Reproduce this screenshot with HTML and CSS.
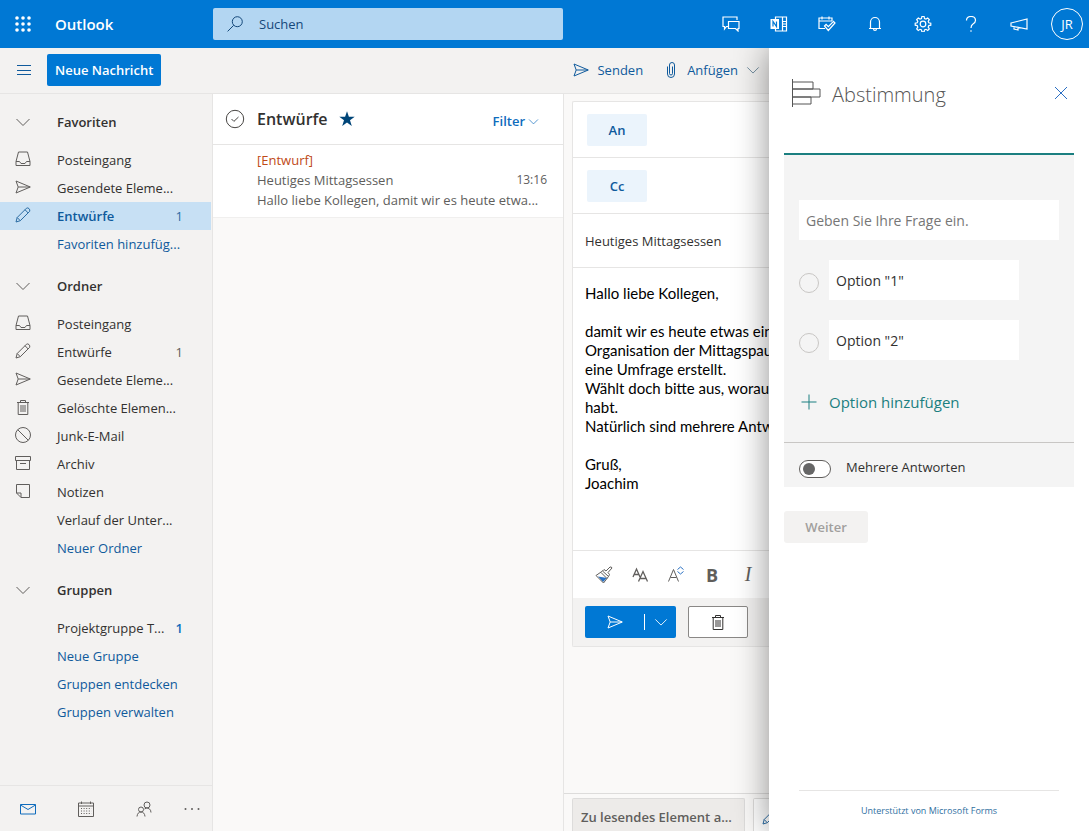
FILE: index.html
```html
<!DOCTYPE html>
<html lang="de">
<head>
<meta charset="utf-8">
<title>Outlook</title>
<link rel="stylesheet" href="styles.css">
</head>
<body>
<svg class="sprite" aria-hidden="true">
  <symbol id="chevron" viewBox="0 0 16 16"><path d="M1.500 5 8 11.500 14.500 5"/></symbol>
  <symbol id="inbox" viewBox="0 0 16 16"><path d="M3.500 1h9L15 10.500V14.500H1V10.500zM1 10.500h3.500L6 12.500h4l1.500-2H15"/></symbol>
  <symbol id="send" viewBox="0 0 16 16"><path d="M1 2 15.300 8 1 14 3.200 8zM3.200 8H15"/></symbol>
  <symbol id="pencil" viewBox="0 0 16 16"><path d="M1 15l1.200-4.500L11.500 1.200q1.300-.8 2.500.4t.7 2.700L5.300 13.700zM2.200 10.500l3.100 3.200M10 2.700 13.200 6"/></symbol>
  <symbol id="trash" viewBox="0 0 16 16"><path d="M2 3.500h12M5.500 3.500V1.500h5v2M3.200 3.500v12h9.600v-12M6 6v7M8 6v7M10 6v7"/></symbol>
  <symbol id="block" viewBox="0 0 16 16"><circle cx="8" cy="8" r="7.500"/><path d="M2.700 2.700l10.600 10.600"/></symbol>
  <symbol id="archive" viewBox="0 0 16 16"><path d="M.5 1.500h15v4H.5zM1.500 5.500v9h13v-9M5 8.500h6"/></symbol>
  <symbol id="note" viewBox="0 0 16 16"><path d="M1.500 1.500h13v13H6l-4.500-4.500zM1.500 10H6v4.500"/></symbol>
</svg>

<header class="topbar">
  <button class="launcher" aria-label="App-Startfeld"><svg viewBox="0 0 16 16"><g fill="currentColor" stroke="none"><circle cx="2" cy="2" r="1.800"/><circle cx="8" cy="2" r="1.800"/><circle cx="14" cy="2" r="1.800"/><circle cx="2" cy="8" r="1.800"/><circle cx="8" cy="8" r="1.800"/><circle cx="14" cy="8" r="1.800"/><circle cx="2" cy="14" r="1.800"/><circle cx="8" cy="14" r="1.800"/><circle cx="14" cy="14" r="1.800"/></g></svg></button>
  <a class="brand" href="#">Outlook</a>
  <label class="search">
    <svg viewBox="0 0 16 16"><circle cx="10.300" cy="5.700" r="5"/><path d="M6.700 9.300.6 15.400"/></svg>
    <input type="search" placeholder="Suchen" aria-label="Suchen">
  </label>
  <nav class="topicons" aria-label="Werkzeuge">
    <button aria-label="Chat"><svg viewBox="0 0 18 16"><path d="M6 10.500H4.500L2.500 13v-2.500H1V1h14v3M6.500 5.500h10.500v7h-1v2.500l-2.500-2.500h-7z"/></svg></button>
    <button aria-label="OneNote"><svg viewBox="0 0 18 16"><path d="M5.500 3V1h11v14h-11v-2M12.500 1v14M12.500 5.500h4M12.500 8h4M12.500 10.500h4"/><path fill="currentColor" stroke="none" d="M.5 3h8.500v10H.5z"/><path stroke="#0078d4" d="M3 10.500v-5l3.500 5v-5"/></svg></button>
    <button aria-label="Mein Tag"><svg viewBox="0 0 18 16"><path d="M7 12.500H1V2h13v3M1 5h13M4 .5V3.500M11 .5v3M6.500 10l1.600-1.600 2.200 2.200L15.500 5.400 17 7l-6.700 7.500z"/></svg></button>
    <button aria-label="Benachrichtigungen"><svg viewBox="0 0 18 16"><path d="M3 12.500h12M4.500 12.500V6a4.500 4.500 0 0 1 9 0v6.500M7.500 12.500a1.500 2 0 0 0 3 0"/></svg></button>
    <button aria-label="Einstellungen"><svg viewBox="0 0 18 16"><path d="M7.900.5h2.200l.4 2 1.500.6 1.700-1.100 1.600 1.600-1.100 1.700.6 1.500 2 .4v2l-2 .4-.6 1.500 1.100 1.700-1.600 1.600-1.700-1.100-1.500.6-.4 2H7.900l-.4-2-1.500-.6-1.700 1.100-1.600-1.600 1.100-1.700-.6-1.500-2-.4v-2l2-.4.6-1.500-1.100-1.700L4.300 2 6 3.100l1.500-.6z"/><circle cx="9" cy="8" r="2.800"/></svg></button>
    <button aria-label="Hilfe"><svg viewBox="0 0 18 16"><path d="M4.500 4.500q0-4 4.500-4t4.500 4Q13.500 6.500 11 8 9 9.300 9 12M9 14.200v1.600"/></svg></button>
    <button aria-label="Neuigkeiten"><svg viewBox="0 0 18 16"><path d="M1 7 17 3v10L1 10zM4 10.500v2.500l4 1v-2.500"/></svg></button>
  </nav>
  <button class="avatar" aria-label="Konto JR">JR</button>
</header>

<div class="app">
  <div class="workspace">
    <div class="commands">
      <button class="menu" aria-label="Menü"><svg viewBox="0 0 16 16"><path d="M1 3.500h14M1 8.500h14M1 12.500h14"/></svg></button>
      <button class="new">Neue Nachricht</button>
      <div class="actions">
        <button class="action"><svg><use href="#send"/></svg>Senden</button>
        <button class="action"><svg viewBox="0 0 16 16"><path d="M4.500 4.500V12a3.500 3.500 0 0 0 7 0V3a2.500 2.500 0 0 0-5 0v8.500a1.500 1.500 0 0 0 3 0V4.500"/></svg>Anfügen<svg class="drop"><use href="#chevron"/></svg></button>
      </div>
    </div>

    <div class="columns">
      <div class="sidebar">
        <nav class="folders" aria-label="Ordner">
          <section>
            <h2><svg><use href="#chevron"/></svg>Favoriten</h2>
            <a href="#"><svg><use href="#inbox"/></svg>Posteingang</a>
            <a href="#"><svg><use href="#send"/></svg>Gesendete Eleme...</a>
            <a href="#" class="selected"><svg><use href="#pencil"/></svg><strong>Entwürfe</strong><span class="count">1</span></a>
            <a href="#" class="link">Favoriten hinzufüg...</a>
          </section>
          <section>
            <h2><svg><use href="#chevron"/></svg>Ordner</h2>
            <a href="#"><svg><use href="#inbox"/></svg>Posteingang</a>
            <a href="#"><svg><use href="#pencil"/></svg>Entwürfe<span class="count">1</span></a>
            <a href="#"><svg><use href="#send"/></svg>Gesendete Eleme...</a>
            <a href="#"><svg><use href="#trash"/></svg>Gelöschte Elemen...</a>
            <a href="#"><svg><use href="#block"/></svg>Junk-E-Mail</a>
            <a href="#"><svg><use href="#archive"/></svg>Archiv</a>
            <a href="#"><svg><use href="#note"/></svg>Notizen</a>
            <a href="#" class="plain">Verlauf der Unter...</a>
            <a href="#" class="link">Neuer Ordner</a>
          </section>
          <section>
            <h2><svg><use href="#chevron"/></svg>Gruppen</h2>
            <a href="#" class="plain">Projektgruppe T...<span class="count unread">1</span></a>
            <a href="#" class="link">Neue Gruppe</a>
            <a href="#" class="link">Gruppen entdecken</a>
            <a href="#" class="link">Gruppen verwalten</a>
          </section>
        </nav>
        <nav class="modules" aria-label="Module">
          <button class="current" aria-label="E-Mail"><svg viewBox="0 0 16 16"><path d="M.5 3.500h15v9.500H.5zM.5 4 8 8.500 15.500 4"/></svg></button>
          <button aria-label="Kalender"><svg viewBox="0 0 16 16"><path d="M.5 2h15v13.500H.5zM.5 5h15M3.500.5V3M12.500.5V3"/><path stroke-dasharray="1 1.600" d="M3 7.500h10.500M3 10h10.500M3 12.500h10.500"/></svg></button>
          <button aria-label="Personen"><svg viewBox="0 0 16 16"><circle cx="11" cy="4" r="3"/><circle cx="5" cy="8.500" r="2.500"/><path d="M1 15.500q.5-4.500 4-4.500t4 4.500M8.500 8Q11 6 13 7.500q2 1.500 2 4"/></svg></button>
          <button aria-label="Mehr"><svg viewBox="0 0 16 16"><g fill="currentColor" stroke="none"><circle cx="1.500" cy="8" r="1"/><circle cx="8" cy="8" r="1"/><circle cx="14.500" cy="8" r="1"/></g></svg></button>
        </nav>
      </div>

      <section class="messages" aria-label="Nachrichtenliste">
        <header class="listhead">
          <button class="check" aria-label="Alle auswählen"><svg viewBox="0 0 20 20"><circle cx="10" cy="10" r="8.700"/><path d="M6.500 10l2.400 2.400L13.500 8"/></svg></button>
          <h1>Entwürfe</h1>
          <svg class="star" viewBox="0 0 16 16"><path d="M8 .3l1.900 5.500h5.800L11 9.300l1.800 5.600L8 11.500l-4.800 3.400L5 9.300.3 5.800h5.800z"/></svg>
          <button class="filter">Filter<svg><use href="#chevron"/></svg></button>
        </header>
        <a class="message" href="#">
          <span class="draft">[Entwurf]</span>
          <span class="subject">Heutiges Mittagsessen<time>13:16</time></span>
          <span class="preview">Hallo liebe Kollegen, damit wir es heute etwa...</span>
        </a>
      </section>

      <section class="reading" aria-label="Nachricht verfassen">
        <form class="card">
          <div class="recipient"><button type="button">An</button></div>
          <div class="recipient"><button type="button">Cc</button></div>
          <input class="topic" aria-label="Betreff" value="Heutiges Mittagsessen">
          <div class="editor" contenteditable="true" role="textbox" aria-label="Nachrichtentext">
            <p>Hallo liebe Kollegen,</p>
            <p>damit wir es heute etwas ein<br>Organisation der Mittagspau<br>eine Umfrage erstellt.<br>Wählt doch bitte aus, worauf<br>habt.<br>Natürlich sind mehrere Antw</p>
            <p>Gruß,<br>Joachim</p>
          </div>
          <div class="format">
            <button type="button" aria-label="Format übertragen"><svg viewBox="0 0 18 18"><path fill="#2b72c4" stroke="none" d="M3 10.500l9 1.500L8 16z"/><path d="M1 9.500 7.500 5l6 5.500L8.500 17zM7.500 5 9 3.500 11 5l4-4q1.500-.5 2 1l-4 4.500 1.500 2-1 2M6 6.500l6 6"/></svg></button>
            <button type="button" aria-label="Schriftart"><svg viewBox="0 0 18 18"><path stroke-width="1.300" d="M2 11 5.500 3 9 11M3.200 8.500h4.600M7.500 15.500 12 5.500l4.500 10M9 12.500h6"/></svg></button>
            <button type="button" aria-label="Schriftgrad"><svg viewBox="0 0 18 18"><path d="M1.500 15.500 6.500 3.500l5 12M3.500 11.500h6"/><path stroke="#2b72c4" d="M10.500 3.500l3-2.500 3 2.500M10.500 5.500l3 2.500 3-2.500"/></svg></button>
            <button type="button" class="bold">B</button>
            <button type="button" class="italic">I</button>
          </div>
          <div class="submit">
            <div class="split">
              <button type="button" aria-label="Senden"><svg><use href="#send"/></svg></button>
              <button type="button" class="more" aria-label="Weitere Sendeoptionen"><svg><use href="#chevron"/></svg></button>
            </div>
            <button type="button" class="discard" aria-label="Verwerfen"><svg><use href="#trash"/></svg></button>
          </div>
        </form>
        <div class="tabs">
          <button class="tab">Zu lesendes Element a...</button>
          <button class="tab open" aria-label="Entwurf"><svg><use href="#pencil"/></svg></button>
        </div>
      </section>
    </div>
  </div>

  <aside class="poll">
    <header class="pollhead">
      <svg viewBox="0 0 30 28"><path d="M1.500 0v28M1.500 3H22v7H1.500M1.500 10H29v8H1.500M1.500 18H20v7H1.500"/></svg>
      <h2>Abstimmung</h2>
      <button aria-label="Schließen"><svg viewBox="0 0 16 16"><path d="M2 2l12 12M14 2 2 14"/></svg></button>
    </header>
    <div class="form">
      <div class="fields">
        <input class="question" placeholder="Geben Sie Ihre Frage ein." aria-label="Frage">
        <div class="option"><input type="radio" name="poll" aria-label="Option 1 wählen"><input class="answer" aria-label="Option 1" value='Option "1"'></div>
        <div class="option"><input type="radio" name="poll" aria-label="Option 2 wählen"><input class="answer" aria-label="Option 2" value='Option "2"'></div>
        <button class="add"><svg viewBox="0 0 16 16"><path d="M8 .5v15M.5 8h15"/></svg>Option hinzufügen</button>
      </div>
      <label class="multiple"><input type="checkbox" role="switch">Mehrere Antworten</label>
    </div>
    <button class="next" disabled>Weiter</button>
    <footer><a href="#">Unterstützt von Microsoft Forms</a></footer>
  </aside>
</div>
</body>
</html>
```
FILE: styles.css
```css
* { box-sizing: border-box; }
body {
  margin: 0;
  height: 100vh;
  display: flex;
  flex-direction: column;
  overflow: hidden;
  font: 13px/20px "Open Sans", "Noto Sans", sans-serif;
  color: #323130;
  background: #faf9f8;
}
button, input { font: inherit; color: inherit; border: 0; background: none; padding: 0; margin: 0; min-width: 0; }
a { color: inherit; text-decoration: none; }
h1, h2, p { margin: 0; }
svg { width: 16px; height: 16px; fill: none; stroke: currentColor; stroke-width: 1; flex: none; display: block; }
.sprite { display: none; }

.topbar {
  position: relative;
  z-index: 2;
  flex: none;
  height: 48px;
  display: flex;
  align-items: center;
  background: #0078d4;
  color: #fff;
}
.launcher { width: 46px; display: grid; place-items: center; }
.brand { width: 167px; padding-left: 9px; font-size: 15px; font-weight: 600; }
.search {
  flex: 0 1 350px;
  height: 32px;
  display: flex;
  align-items: center;
  gap: 16px;
  padding: 0 14px;
  border-radius: 2px;
  background: #b3d6f2;
  color: #15487a;
}
.search input { flex: 1; }
.search input::placeholder { color: #15487a; opacity: 1; }
.topicons { margin-left: auto; display: flex; }
.topicons button { width: 48px; display: grid; place-items: center; }
.topicons svg { width: 18px; stroke-width: 1.200; }
.avatar { width: 32px; height: 32px; margin: 0 6px 0 8px; border: 1px solid #fff; border-radius: 50%; font-size: 13px; }

.app { flex: 1; min-height: 0; display: flex; }
.workspace { flex: 1; min-width: 0; display: flex; flex-direction: column; }
.commands {
  flex: none;
  height: 46px;
  display: flex;
  align-items: center;
  padding-bottom: 2px;
  background: #f3f2f1;
  border-bottom: 1px solid #e6e5e4;
  color: #0f5a9c;
}
.menu { width: 47px; display: grid; place-items: center; }
.new { height: 32px; padding: 0 8px; border-radius: 2px; background: #0078d4; color: #fff; font-weight: 600; }
.actions { margin-left: auto; display: flex; gap: 20px; padding-right: 9px; }
.action { display: flex; align-items: center; gap: 8px; }
.drop { width: 14px; height: 14px; color: #5f7f92; }

.columns { flex: 1; min-height: 0; display: flex; }
.sidebar { flex: 0 0 213px; display: flex; flex-direction: column; background: #f3f2f1; border-right: 1px solid #e6e5e4; }
.folders { flex: 1; min-height: 0; overflow: hidden; }
.folders section { padding-top: 4px; }
.folders h2 { height: 48px; display: flex; align-items: center; gap: 26px; padding-left: 15px; font-size: 13px; font-weight: 600; }
.folders a { height: 28px; display: flex; align-items: center; gap: 26px; margin-right: 1px; padding: 0 28px 0 15px; white-space: nowrap; }
.folders svg { color: #605e5c; }
.folders a svg { margin-bottom: 2px; }
.folders strong { font-weight: 600; }
.folders .count { margin-left: auto; color: #605e5c; }
.folders .plain, .folders .link { padding-left: 57px; gap: 8px; }
.folders .link { color: #0f5a9c; }
.folders .unread { color: #0f6cbd; font-weight: 600; }
.folders .selected { background: #c7e0f4; color: #0f5a9c; }
.folders .selected svg, .folders .selected .count { color: #2b6ca3; }
.modules { flex: none; height: 46px; display: grid; grid-template-columns: 56px 60px 56px 1fr; align-items: center; border-top: 1px solid #e6e5e4; color: #605e5c; }
.modules button { display: grid; place-items: center; }
.modules .current { color: #0f6cbd; }

.messages { flex: 1 0 350px; }
.listhead { height: 51px; display: flex; align-items: center; padding: 0 24px 0 12px; background: #fff; border-bottom: 1px solid #e6e5e4; }
.check svg { width: 20px; height: 20px; color: #484644; }
.listhead h1 { margin: 0 11px 0 12px; font-size: 16px; font-weight: 600; }
.star { fill: #004578; stroke: none; }
.filter { margin-left: auto; padding-top: 4px; display: flex; align-items: center; gap: 3px; color: #0f6cbd; font-weight: 600; }
.filter svg { width: 11px; height: 11px; }
.message { display: flex; flex-direction: column; padding: 5px 16px 7px 44px; background: #fff; border-bottom: 1px solid #f0efee; color: #605e5c; white-space: nowrap; }
.draft { color: #c04a17; }
.subject { display: flex; justify-content: space-between; }
.subject time { font-size: 12px; }

.reading { flex: 0 0 206px; min-width: 0; display: flex; flex-direction: column; justify-content: space-between; overflow: hidden; border-left: 1px solid #e6e5e4; white-space: nowrap; }
.card { margin: 7px 0 0 8px; background: #fff; border: 1px solid #e6e5e4; border-right: 0; border-radius: 2px 0 0 2px; }
.recipient { height: 56px; display: flex; align-items: center; padding-left: 14px; border-bottom: 1px solid #e6e5e4; }
.recipient button { width: 60px; height: 32px; border-radius: 2px; background: #ebf4fc; color: #0f5a9c; font-weight: 600; }
.topic { display: block; width: 100%; height: 54px; padding-left: 12px; border-bottom: 1px solid #e6e5e4; }
.editor { min-height: 282px; padding: 16px 0 0 12px; outline: 0; font: 15px/19px Lato, sans-serif; color: #000; }
.editor p { margin-bottom: 19px; }
.format { height: 48px; display: flex; align-items: center; gap: 18px; padding-left: 22px; border-top: 1px solid #e6e5e4; color: #605e5c; }
.format button { width: 18px; }
.format svg { width: 18px; height: 18px; }
.format .bold { font-size: 18px; font-weight: 700; }
.format .italic { font: italic 20px "Liberation Serif", serif; }
.submit { height: 48px; display: flex; align-items: center; gap: 12px; padding-left: 12px; background: #f3f2f1; }
.split { height: 32px; width: 91px; display: flex; align-items: center; border-radius: 2px; background: #0078d4; color: #fff; }
.split button { flex: 1; height: 16px; display: grid; place-items: center; }
.split .more { flex: 0 0 32px; border-left: 1px solid #fff; }
.more svg { width: 14px; height: 14px; }
.discard { width: 60px; height: 32px; display: grid; place-items: center; border: 1px solid #8a8886; border-radius: 2px; background: #fff; }
.tabs { flex: none; height: 38px; display: flex; gap: 8px; padding: 4px 0 0 8px; border-top: 1px solid #dddcdb; }
.tab { flex: none; padding: 4px 12px 0 8px; border: 1px solid #dddcdb; border-bottom: 0; border-radius: 2px 2px 0 0; background: #edebe9; color: #605e5c; font-weight: 600; }
.tab.open { background: #fff; color: #2b6ca3; }

.poll { position: relative; z-index: 1; flex: 0 0 320px; display: flex; flex-direction: column; padding: 0 15px; background: #fff; box-shadow: 0 0 32px rgba(0, 0, 0, .44); }
.pollhead { height: 107px; display: flex; align-items: center; padding: 0 5px 16px 7px; border-bottom: 2px solid #1b7f80; color: #555; }
.pollhead > svg { width: 30px; height: 28px; }
.pollhead h2 { margin-left: 11px; padding-top: 4px; font-size: 20px; font-weight: 300; }
.pollhead button { margin-left: auto; color: #2b6fc4; }
.form { background: #f4f4f4; }
.fields { height: 288px; display: flex; flex-direction: column; gap: 20px; padding: 45px 15px 0; border-bottom: 1px solid #c8c6c4; font-size: 14px; }
.question, .answer { height: 40px; padding: 0 7px; background: #fff; }
.question::placeholder { color: #767676; opacity: 1; }
.option { display: flex; align-items: center; gap: 10px; }
.option [type="radio"] { appearance: none; width: 20px; height: 20px; margin-top: 6px; border: 1px solid #c8c6c4; border-radius: 50%; }
.answer { width: 190px; }
.add { display: flex; align-items: center; gap: 12px; margin-top: 12px; padding-left: 2px; color: #1b7f80; font-size: 15px; }
.multiple { height: 44px; display: flex; align-items: center; gap: 15px; padding: 4px 15px 0; }
.multiple input { appearance: none; width: 32px; height: 18px; display: flex; align-items: center; margin-top: 4px; padding-left: 3px; border: 1px solid #605e5c; border-radius: 9px; background: #fff; }
.multiple input::before { content: ""; width: 12px; height: 12px; border-radius: 50%; background: #666; }
.next { align-self: flex-start; width: 84px; height: 32px; margin-top: 24px; border-radius: 3px; background: #f3f2f1; color: #a19f9d; font-weight: 600; }
footer { margin: auto 15px 0; height: 41px; border-top: 1px solid #e6e5e4; padding-top: 10px; text-align: center; font-size: 9px; color: #2f6f9f; }
```
